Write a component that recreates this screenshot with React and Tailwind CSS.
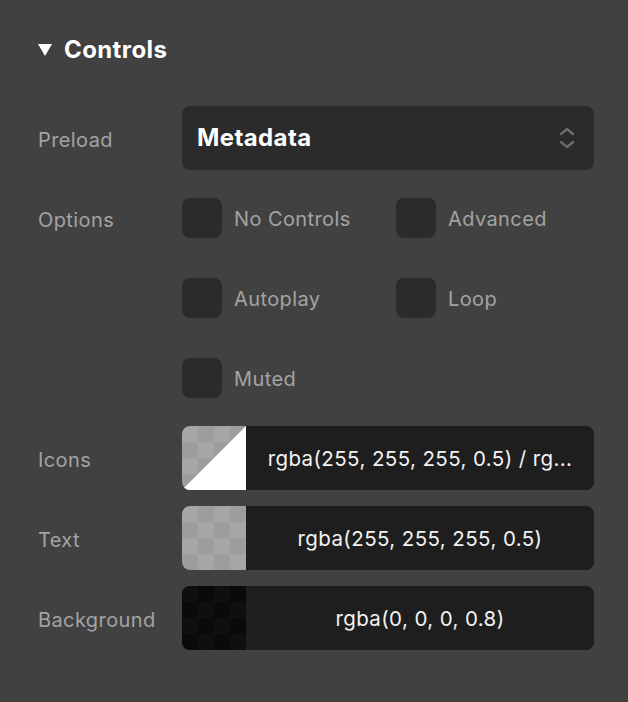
import React from 'react';

const font = { fontFamily: 'Inter, "Noto Sans", sans-serif' };

function Checker({ dark }) {
  const cells = Array.from({ length: 16 }, (_, i) => (Math.floor(i / 4) + i) % 2 === 0);
  return (
    <div className="grid grid-cols-4 grid-rows-4 w-16 h-16 shrink-0">
      {cells.map((a, i) => (
        <div
          key={i}
          className={
            dark
              ? a ? 'bg-[#0f0f0f]' : 'bg-[#0a0a0a]'
              : a ? 'bg-[#a6a6a6]' : 'bg-[#9d9d9d]'
          }
        />
      ))}
    </div>
  );
}

function ColorField({ value, dark, split }) {
  return (
    <div className="flex h-16 w-[412px] shrink-0 rounded-lg overflow-hidden bg-[#1e1e1e]">
      <div className="relative w-16 h-16 shrink-0">
        <Checker dark={dark} />
        {split && (
          <svg className="absolute inset-0" width="64" height="64" viewBox="0 0 64 64">
            <polygon points="0,64 64,0 64,64" fill="#ffffff" />
          </svg>
        )}
      </div>
      <div className="flex-1 flex items-center justify-center pt-[2px] text-[20.5px] tracking-[0.4px] text-[#f2f2f2] whitespace-nowrap overflow-hidden">
        {value}
      </div>
    </div>
  );
}

function Checkbox({ label }) {
  return (
    <div className="flex items-center gap-3 h-16">
      <div className="w-10 h-10 rounded-lg bg-[#2b2b2b]" />
      <span className="pt-[2px] text-[20px] tracking-[0.4px] text-[#a3a3a3]">{label}</span>
    </div>
  );
}

function Label({ children }) {
  return (
    <div className="w-[144px] shrink-0 h-16 flex items-center pt-[3px] text-[20px] tracking-[0.4px] text-[#a3a3a3]">
      {children}
    </div>
  );
}

export default function App() {
  return (
    <div className="min-h-screen w-[628px] bg-[#414141] pl-[38px] pr-[34px] pt-[34px]" style={font}>
      <div className="flex items-center gap-3 h-8 mb-10">
        <svg width="14" height="12" viewBox="0 0 14 12">
          <polygon points="0,0 14,0 7,12" fill="#ffffff" />
        </svg>
        <span className="text-[24px] font-bold text-white tracking-[0.4px]">Controls</span>
      </div>

      <div className="flex flex-col gap-4">
        <div className="flex">
          <Label>Preload</Label>
          <div className="flex items-center justify-between h-16 w-[412px] shrink-0 rounded-lg bg-[#2b2b2b] pl-[15px] pr-[19px]">
            <span className="text-[24px] font-bold text-white tracking-[0.4px]">Metadata</span>
            <svg width="16" height="22" viewBox="0 0 16 22" fill="none" stroke="#6b6b6b" strokeWidth="2.4" strokeLinecap="round" strokeLinejoin="round">
              <polyline points="2,7 8,2 14,7" />
              <polyline points="2,15 8,20 14,15" />
            </svg>
          </div>
        </div>

        <div className="flex">
          <Label>Options</Label>
          <div className="grid grid-cols-[214px_198px] gap-y-4">
            <Checkbox label="No Controls" />
            <Checkbox label="Advanced" />
            <Checkbox label="Autoplay" />
            <Checkbox label="Loop" />
            <Checkbox label="Muted" />
          </div>
        </div>

        <div className="flex">
          <Label>Icons</Label>
          <ColorField value="rgba(255, 255, 255, 0.5) / rg..." split />
        </div>
        <div className="flex">
          <Label>Text</Label>
          <ColorField value="rgba(255, 255, 255, 0.5)" />
        </div>
        <div className="flex">
          <Label>Background</Label>
          <ColorField value="rgba(0, 0, 0, 0.8)" dark />
        </div>
      </div>
    </div>
  );
}
